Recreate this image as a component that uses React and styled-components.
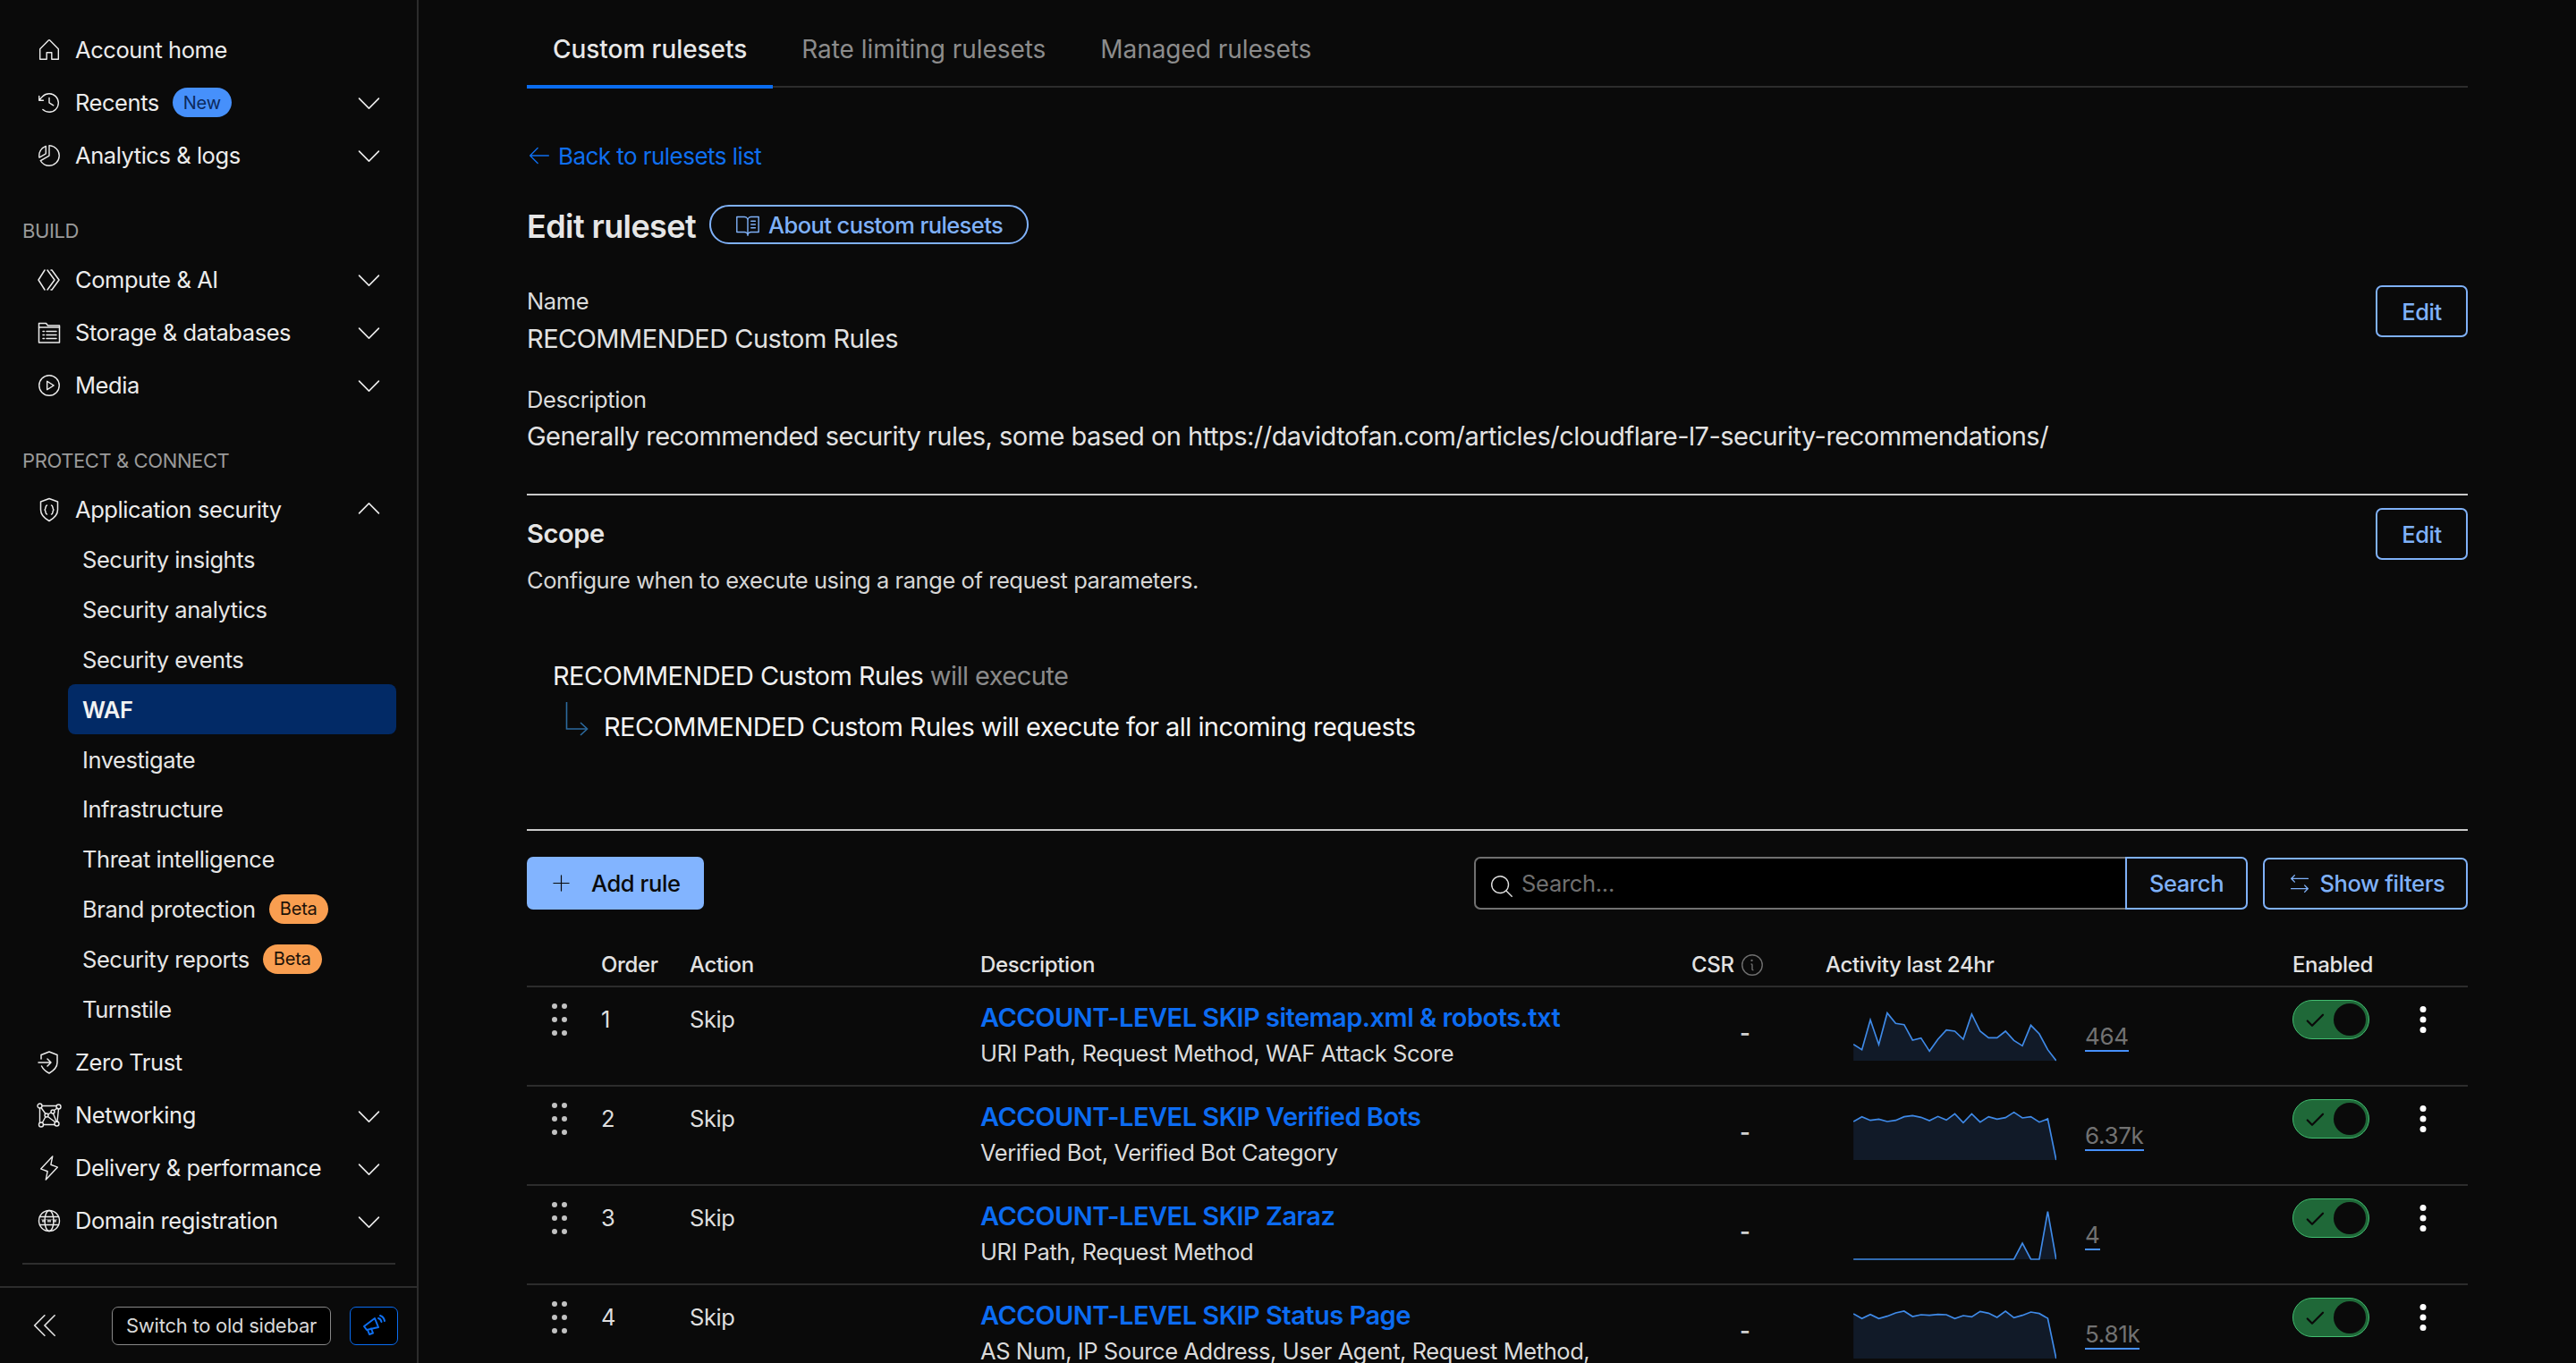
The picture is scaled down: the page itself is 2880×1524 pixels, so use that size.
import React from "react";
import styled, { createGlobalStyle } from "styled-components";
import {
  PiHouseLight, PiClockCounterClockwiseLight, PiChartPieSliceLight, PiCaretDownLight, PiCaretUpLight,
  PiCaretDoubleLeftLight, PiMagnifyingGlassLight, PiArrowsLeftRightLight, PiInfoLight, PiPlusLight,
  PiCheckBold, PiBookOpenTextLight, PiPlayCircleLight, PiLightningLight, PiArrowLeftLight,
} from "react-icons/pi";

const Global = createGlobalStyle`
  html, body { margin: 0; padding: 0; height: 1524px; overflow: hidden; background: #0a0a0a; }
  body { font-family: Inter, "Liberation Sans", sans-serif; color: #e8e8e8; }
  * { box-sizing: border-box; }
  svg { flex: none; }
`;

const Page = styled.div`display: flex; width: 2880px; height: 1524px; overflow: hidden; background: #0a0a0a;`;
const Sidebar = styled.aside`width: 468px; flex: none; height: 1524px; border-right: 2px solid #2c2c2c; display: flex; flex-direction: column;`;
const SideScroll = styled.nav`flex: 1; padding: 26px 25px 0 25px; min-height: 0;`;
const NavRow = styled.div`display: flex; align-items: center; height: 59px; padding-left: 16px; padding-right: 11px; font-size: 25.5px; letter-spacing: -0.45px; color: #ececec; line-height: 32px;`;
const NavIcon = styled.span`width: 28px; height: 28px; margin-right: 15px; display: flex; align-items: center; justify-content: center; flex: none; font-size: 30px; color: #ececec;`;
const NavLabel = styled.span`flex: none;`;
const Caret = styled.span`margin-left: auto; display: flex; font-size: 35px; color: #ececec;`;
const SectionLabel = styled.div`height: 80px; display: flex; align-items: flex-end; padding-bottom: 10px; font-size: 22px; letter-spacing: -0.4px; line-height: 30px; color: #9a9a9a;`;
const SubList = styled.div`margin: -1px 0 3px;`;
const SubRow = styled.div`display: flex; align-items: center; height: 55.8px; width: 367px; margin-left: 51px; padding-left: 16px; border-radius: 8px; font-size: 25.5px; letter-spacing: -0.45px; color: ${p => p.$active ? "#f2f2f2" : "#e6e6e6"}; font-weight: ${p => p.$active ? 600 : 400}; background: ${p => p.$active ? "#022a66" : "transparent"};`;
const Badge = styled.span`display: inline-flex; align-items: center; justify-content: center; height: 33px; width: 66px; margin-left: 15px; border-radius: 17px; font-size: 20px; letter-spacing: -0.2px; background: ${p => p.$new ? "#4690fb" : "#f99e50"}; color: ${p => p.$new ? "#0c2a5e" : "#1d1208"};`;
const SideDivider = styled.div`height: 2px; background: #2e2e2e; margin: 17px 0 0 0; width: 417px;`;
const SideFooter = styled.div`height: 86px; flex: none; border-top: 2px solid #2c2c2c; display: flex; align-items: center; padding-left: 33px; color: #dcdcdc;`;
const CollapseIcon = styled.span`display: flex; font-size: 36px; width: 92px; color: #dedede;`;
const OldBtn = styled.div`height: 43px; width: 245px; border: 1.5px solid #888; border-radius: 7px; background: #000; font-size: 22px; letter-spacing: -0.25px; color: #d8d8d8; display: flex; align-items: center; justify-content: center;`;
const PromoBtn = styled.div`height: 43px; width: 54px; margin-left: 21px; border: 1.5px solid #0a6cf0; border-radius: 7px; background: #000; display: flex; align-items: center; justify-content: center;`;

const Main = styled.main`flex: 1; min-width: 0; padding: 0 121px; height: 1524px; overflow: hidden;`;
const Tabs = styled.div`display: flex; gap: 3px; height: 98px; border-bottom: 2px solid #2c2c2c;`;
const Tab = styled.div`height: 99px; padding: 14px 29px 0; display: flex; align-items: center; font-size: 28px; letter-spacing: -0.05px; color: ${p => p.$active ? "#e8e8e8" : "#8c8c8c"}; font-weight: ${p => p.$active ? 500 : 400}; border-bottom: 4px solid ${p => p.$active ? "#0a6cf0" : "transparent"};`;
const BackLink = styled.div`margin-top: 56px; height: 40px; display: flex; align-items: center; gap: 6px; font-size: 26px; letter-spacing: -0.55px; color: #0f6ff0;`;
const BackIcon = styled.span`display: flex; font-size: 30px; margin-left: -1px;`;
const TitleRow = styled.div`margin-top: 35px; height: 44px; display: flex; align-items: center; gap: 15px;`;
const Title = styled.h1`margin: 0; font-size: 36px; letter-spacing: -0.6px; font-weight: 600; color: #e6e6e6; line-height: 44px; position: relative; top: 2px;`;
const Pill = styled.div`height: 44px; padding: 0 27px 0 26px; border: 2px solid #7fb1f8; border-radius: 22px; display: flex; align-items: center; gap: 8px; font-size: 25.5px; letter-spacing: -0.6px; font-weight: 500; color: #7fb1f8;`;
const PillIcon = styled.span`display: flex; font-size: 30px;`;
const InfoBlock = styled.div`display: flex; justify-content: space-between; align-items: flex-start; margin-top: 44px;`;
const FieldLabel = styled.div`font-size: 25.5px; letter-spacing: -0.4px; line-height: 40px; color: #dcdcdc; margin-top: ${p => p.$top || 0}px;`;
const FieldValue = styled.div`font-size: 29px; letter-spacing: -0.52px; line-height: 40px; color: #e2e2e2; margin-top: ${p => p.$top || 0}px;`;
const OutlineBtn = styled.div`height: 58px; display: inline-flex; align-items: center; justify-content: center; gap: 8px; flex: none; width: ${p => p.$w}px; border: 2px solid #7fb1f8; border-radius: 7px; font-size: 25.5px; letter-spacing: -0.4px; font-weight: 500; color: #7fb1f8; margin-top: ${p => p.$top || 0}px;`;
const FilterIcon = styled.span`display: flex; font-size: 30px;`;
const Rule = styled.div`height: 2px; background: ${p => p.$strong ? "#c9c9c9" : "#2c2c2c"}; margin-top: ${p => p.$top || 0}px;`;
const ScopeHead = styled.div`display: flex; justify-content: space-between; align-items: center; margin-top: 14px; height: 58px;`;
const ScopeTitle = styled.h2`margin: 0; font-size: 29px; letter-spacing: -0.4px; font-weight: 600; color: #e6e6e6; position: relative; top: -1px;`;
const ScopeHint = styled.div`font-size: 25.5px; letter-spacing: -0.44px; line-height: 40px; color: #d6d6d6; margin-top: 3px;`;
const ExecBlock = styled.div`padding: 67px 0 0 29px;`;
const ExecLine = styled.div`font-size: 29px; letter-spacing: -0.55px; line-height: 40px; color: #f0f0f0;`;
const Muted = styled.span`color: #8a8a8a;`;
const ExecChild = styled.div`display: flex; align-items: flex-start; margin-top: 17px; font-size: 29px; letter-spacing: -0.55px; line-height: 40px; color: #f4f4f4;`;
const ElbowWrap = styled.span`display: flex; width: 57px; padding-left: 14px; margin-top: -9px; flex: none;`;
const Toolbar = styled.div`display: flex; align-items: center; margin-top: 29px; height: 59px;`;
const AddBtn = styled.div`width: 198px; height: 59px; background: #82b4ff; border-radius: 7px; display: flex; align-items: center; padding-left: 26px; gap: 21px; font-size: 25.5px; letter-spacing: -0.4px; font-weight: 500; color: #0a0a0a;`;
const AddIcon = styled.span`display: flex; font-size: 25px;`;
const SearchGroup = styled.div`margin-left: auto; display: flex; height: 59px;`;
const SearchField = styled.div`width: 728px; background: #000; border: 2px solid #707070; border-right: 0; border-radius: 7px 0 0 7px; display: flex; align-items: center; padding-left: 14px; gap: 7px; font-size: 25.5px; letter-spacing: -0.3px; color: #707070;`;
const SearchIcon = styled.span`display: flex; font-size: 30px; color: #e0e0e0; margin-top: 6px;`;
const SearchBtn = styled.div`width: 137px; border: 2px solid #7fb1f8; border-radius: 0 7px 7px 0; display: flex; align-items: center; justify-content: center; font-size: 25.5px; letter-spacing: -0.4px; font-weight: 500; color: #7fb1f8;`;
const FilterWrap = styled.div`margin-left: 17px;`;
const grid = `display: grid; grid-template-columns: 83px 99px 325px 795px 150px 522px 141px 55px;`;
const HeaderRow = styled.div`${grid} height: 87px; align-items: end; padding-bottom: 7px; border-bottom: 2px solid #2c2c2c; font-size: 24px; letter-spacing: -0.35px; font-weight: 500; color: #e2e2e2; line-height: 32px;`;
const HeadCell = styled.div`display: flex; align-items: center; gap: 5px;`;
const InfoIcon = styled.span`display: flex; font-size: 30px; color: #6e6e6e;`;
const Row = styled.div`${grid} height: 111px; border-bottom: 2px solid #2c2c2c; font-size: 25.5px; letter-spacing: -0.4px; color: #dedede;`;
const DragCell = styled.div`padding: 18px 0 0 26px;`;
const TextCell = styled.div`padding-top: 20px; line-height: 32px;`;
const DescCell = styled.div`padding-top: 16px; display: flex; flex-direction: column;`;
const RuleTitle = styled.div`font-size: 29px; letter-spacing: -0.52px; line-height: 36px; font-weight: 600; color: #0c6cf2; white-space: nowrap;`;
const RuleSub = styled.div`font-size: 25.5px; letter-spacing: -0.43px; line-height: 32px; color: #dadada; margin-top: 6px; white-space: nowrap;`;
const DashCell = styled.div`padding: 35px 0 0 54px; line-height: 32px; color: #d0d0d0; font-weight: 600;`;
const ActivityCell = styled.div`padding: 22px 0 0 31px; display: flex; align-items: flex-start;`;
const Count = styled.div`margin: 17px 0 0 32px; font-size: 26px; letter-spacing: -0.3px; line-height: 31px; color: #727272; border-bottom: 2px solid #4690fb;`;
const SwitchCell = styled.div`padding-top: 14px;`;
const Toggle = styled.div`width: 86px; height: 44px; border-radius: 22px; background: #1f6838; border: 1.5px solid #42bd70; display: flex; align-items: center; justify-content: space-between; padding: 0 3px 0 12px;`;
const Knob = styled.div`width: 36px; height: 36px; border-radius: 50%; background: #0a0a0a;`;
const CheckIcon = styled.span`display: flex; font-size: 24px; color: #0a0a0a;`;
const KebabCell = styled.div`padding: 19px 0 0 0;`;

const sv = { width: 28, height: 28, viewBox: "0 0 28 28", fill: "none", stroke: "currentColor", strokeWidth: 1.5, strokeLinecap: "round", strokeLinejoin: "round" };
const IcCompute = () => <svg {...sv}><path d="M9 3 2 14l7 11"/><path d="M12 3l8 11-8 11"/><path d="M16 3h1l8 11-8 11h-1"/></svg>;
const IcStorage = () => <svg {...sv}><path d="M2.500 25V3.500h8l2 2.500h13v19z"/><path d="M2.500 8h23"/><path d="M7 12.500h1.500M11 12.500h11M7 16.500h1.500M11 16.500h11M7 20.500h1.500M11 20.500h11"/></svg>;
const IcAppSec = () => <svg {...sv}><path d="M14 1.500 23.500 5v9c0 6-4 9.500-9.500 12.500C8.500 23.500 4.500 20 4.500 14V5z"/><path d="M11.500 9c-2 0-1 4-2.500 5 1.500 1 .5 5 2.500 5M16.500 9c2 0 1 4 2.500 5-1.500 1-.5 5-2.500 5"/></svg>;
const IcZero = () => <svg {...sv}><path d="M5 10V5.500l9-3.500 9 3.500V14c0 6-4 9-9 12-4-2-7-5-8.500-8"/><path d="M2 14h14M12 10l4 4-4 4"/></svg>;
const IcNet = () => <svg {...sv} strokeWidth={1.4}><circle cx="3.500" cy="3.500" r="2.500"/><circle cx="24.500" cy="4.500" r="2.500"/><circle cx="5" cy="24.500" r="2.500"/><circle cx="22.500" cy="23.500" r="2.500"/><circle cx="11" cy="14" r="2"/><circle cx="18" cy="10" r="2"/><path d="M6 3.500H22M3.500 6v16M7.500 24.500h12.500M24.500 7 23 21M5 5.500l5 7M12.500 13l3.500-2M19.500 8.500l3.500-2.500M12.500 15.500l8 6M6.500 22l3.500-6.500M18.500 12l3.500 9"/></svg>;
const IcGlobe = () => <svg {...sv} strokeWidth={1.4}><circle cx="14" cy="14" r="11.500"/><ellipse cx="14" cy="14" rx="5" ry="11.500"/><path d="M3.500 9.500h21M3.500 18.500h21"/><path d="M6 12.500l1 3 1-3 1 3 1-3M12 12.500l1 3 1-3 1 3 1-3M18 12.500l1 3 1-3 1 3 1-3" strokeWidth={0.9}/></svg>;
const IcMega = () => <svg width="28" height="28" viewBox="0 0 28 28" fill="none" stroke="#0f6ff0" strokeWidth="2" strokeLinecap="round" strokeLinejoin="round"><path d="M3 15 15 6l4 10-13 3z"/><path d="M7 19l2 5 4-1.500-2-5"/><path d="M19 6c2 .5 3 2 3.500 4M21 3c3 1 4.500 3 5 6"/></svg>;
const Elbow = () => <svg width="26" height="40" viewBox="0 0 26 40" fill="none" stroke="#2c6a9e" strokeWidth="1.6"><path d="M1.500 1v30H24"/><path d="M17 24l7.500 7-7.500 7"/></svg>;
const Drag = () => <svg width="22" height="36" viewBox="0 0 22 36" fill="#c2c2c2"><circle cx="5" cy="3" r="3"/><circle cx="16" cy="3" r="3"/><circle cx="5" cy="18" r="3"/><circle cx="16" cy="18" r="3"/><circle cx="5" cy="33" r="3"/><circle cx="16" cy="33" r="3"/></svg>;
const Kebab = () => <svg width="10" height="36" viewBox="0 0 10 36" fill="#fff"><circle cx="5" cy="5.500" r="3.500"/><circle cx="5" cy="17" r="3.500"/><circle cx="5" cy="28.500" r="3.500"/></svg>;

const Spark = ({ base, data }) => {
  const pts = data.map((y, i) => [i * 680 / 24, 180 - (base - y)]);
  const line = pts.map(p => p.join(",")).join(" ");
  return (
    <svg width="227" height="62" viewBox="0 0 680 186">
      <polygon points={`0,180 ${line} 680,180`} fill="#111a28" />
      <polyline points={line} fill="none" stroke="#3f8ae8" strokeWidth="5" strokeLinejoin="miter" />
    </svg>
  );
};

const topNav = [
  [<PiHouseLight />, "Account home", false],
  [<PiClockCounterClockwiseLight />, "Recents", true, "New"],
  [<PiChartPieSliceLight />, "Analytics & logs", true],
];
const buildNav = [[<IcCompute />, "Compute & AI", true], [<IcStorage />, "Storage & databases", true], [<PiPlayCircleLight />, "Media", true]];
const subNav = [["Security insights"], ["Security analytics"], ["Security events"], ["WAF", "active"], ["Investigate"], ["Infrastructure"], ["Threat intelligence"], ["Brand protection", "Beta"], ["Security reports", "Beta"], ["Turnstile"]];
const lowNav = [[<IcZero />, "Zero Trust", false], [<IcNet />, "Networking", true], [<PiLightningLight />, "Delivery & performance", true], [<IcGlobe />, "Domain registration", true]];

const rows = [
  { n: 1, t: "ACCOUNT-LEVEL SKIP sitemap.xml & robots.txt", s: "URI Path, Request Method, WAF Attack Score", c: "464", base: 287, d: [232,250,150,233,127,162,166,218,211,255,215,184,188,215,131,188,210,210,188,219,237,168,197,250,287] },
  { n: 2, t: "ACCOUNT-LEVEL SKIP Verified Bots", s: "Verified Bot, Verified Bot Category", c: "6.37k", base: 620, d: [491,475,487,483,491,487,475,471,477,488,474,486,465,495,465,493,475,483,478,460,479,475,493,482,620] },
  { n: 3, t: "ACCOUNT-LEVEL SKIP Zaraz", s: "URI Path, Request Method", c: "4", base: 292, d: [292,292,292,292,292,292,292,292,292,292,292,292,292,292,292,292,292,292,292,292,238,292,292,132,292] },
  { n: 4, t: "ACCOUNT-LEVEL SKIP Status Page", s: "AS Num, IP Source Address, User Agent, Request Method,", c: "5.81k", base: 625, d: [475,491,477,491,483,472,466,484,478,480,477,478,491,481,485,467,473,487,466,488,480,469,474,490,625] },
];

const Nav = ({ items }) => items.map(([ic, label, caret, badge]) => (
  <NavRow key={label}>
    <NavIcon>{ic}</NavIcon>
    <NavLabel>{label}</NavLabel>
    {badge && <Badge $new>{badge}</Badge>}
    {caret && <Caret><PiCaretDownLight /></Caret>}
  </NavRow>
));

export default function App() {
  return (
    <Page>
      <Global />
      <Sidebar>
        <SideScroll>
          <Nav items={topNav} />
          <SectionLabel>BUILD</SectionLabel>
          <Nav items={buildNav} />
          <SectionLabel>PROTECT &amp; CONNECT</SectionLabel>
          <NavRow>
            <NavIcon><IcAppSec /></NavIcon>
            <NavLabel>Application security</NavLabel>
            <Caret><PiCaretUpLight /></Caret>
          </NavRow>
          <SubList>
            {subNav.map(([l, x]) => (
              <SubRow key={l} $active={x === "active"}>
                {l}
                {x === "Beta" && <Badge>Beta</Badge>}
              </SubRow>
            ))}
          </SubList>
          <Nav items={lowNav} />
          <SideDivider />
        </SideScroll>
        <SideFooter>
          <CollapseIcon><PiCaretDoubleLeftLight /></CollapseIcon>
          <OldBtn>Switch to old sidebar</OldBtn>
          <PromoBtn><IcMega /></PromoBtn>
        </SideFooter>
      </Sidebar>
      <Main>
        <Tabs>
          <Tab $active>Custom rulesets</Tab>
          <Tab>Rate limiting rulesets</Tab>
          <Tab>Managed rulesets</Tab>
        </Tabs>
        <BackLink><BackIcon><PiArrowLeftLight /></BackIcon>Back to rulesets list</BackLink>
        <TitleRow>
          <Title>Edit ruleset</Title>
          <Pill><PillIcon><PiBookOpenTextLight /></PillIcon>About custom rulesets</Pill>
        </TitleRow>
        <InfoBlock>
          <div>
            <FieldLabel>Name</FieldLabel>
            <FieldValue $top={2}>RECOMMENDED Custom Rules</FieldValue>
            <FieldLabel $top={28}>Description</FieldLabel>
            <FieldValue $top={1}>Generally recommended security rules, some based on https://davidtofan.com/articles/cloudflare-l7-security-recommendations/</FieldValue>
          </div>
          <OutlineBtn $w={103} $top={2}>Edit</OutlineBtn>
        </InfoBlock>
        <Rule $strong $top={44} />
        <ScopeHead>
          <ScopeTitle>Scope</ScopeTitle>
          <OutlineBtn $w={103}>Edit</OutlineBtn>
        </ScopeHead>
        <ScopeHint>Configure when to execute using a range of request parameters.</ScopeHint>
        <ExecBlock>
          <ExecLine>RECOMMENDED Custom Rules <Muted>will execute</Muted></ExecLine>
          <ExecChild>
            <ElbowWrap><Elbow /></ElbowWrap>
            RECOMMENDED Custom Rules will execute for all incoming requests
          </ExecChild>
        </ExecBlock>
        <Rule $strong $top={94} />
        <Toolbar>
          <AddBtn><AddIcon><PiPlusLight /></AddIcon>Add rule</AddBtn>
          <SearchGroup>
            <SearchField><SearchIcon><PiMagnifyingGlassLight /></SearchIcon>Search...</SearchField>
            <SearchBtn>Search</SearchBtn>
          </SearchGroup>
          <FilterWrap><OutlineBtn $w={229}><FilterIcon><PiArrowsLeftRightLight /></FilterIcon>Show filters</OutlineBtn></FilterWrap>
        </Toolbar>
        <HeaderRow>
          <div />
          <HeadCell>Order</HeadCell>
          <HeadCell>Action</HeadCell>
          <HeadCell>Description</HeadCell>
          <HeadCell>CSR<InfoIcon><PiInfoLight /></InfoIcon></HeadCell>
          <HeadCell>Activity last 24hr</HeadCell>
          <HeadCell>Enabled</HeadCell>
          <div />
        </HeaderRow>
        {rows.map(r => (
          <Row key={r.n}>
            <DragCell><Drag /></DragCell>
            <TextCell>{r.n}</TextCell>
            <TextCell>Skip</TextCell>
            <DescCell><RuleTitle>{r.t}</RuleTitle><RuleSub>{r.s}</RuleSub></DescCell>
            <DashCell>-</DashCell>
            <ActivityCell><Spark base={r.base} data={r.d} /><Count>{r.c}</Count></ActivityCell>
            <SwitchCell><Toggle><CheckIcon><PiCheckBold /></CheckIcon><Knob /></Toggle></SwitchCell>
            <KebabCell><Kebab /></KebabCell>
          </Row>
        ))}
      </Main>
    </Page>
  );
}
